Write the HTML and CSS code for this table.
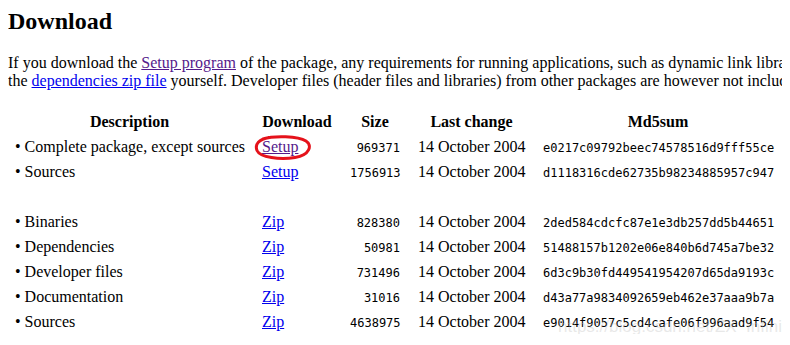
FILE: index.html
```html
<!DOCTYPE html>
<html>
<head>
<meta charset="utf-8">
<title>Download</title>
<link rel="stylesheet" href="styles.css">
</head>
<body>
<h1 class="title">Download</h1>
<p class="intro">If you download the <a class="visited" href="#setup">Setup program</a> of the package, any requirements for running applications, such as dynamic link libraries (DLL's) from the dependencies as listed below under Requirements, are already included. If you download the package as Zip files, then you must download and install<br>the <a href="#deps">dependencies zip file</a> yourself. Developer files (header files and libraries) from other packages are however not included; so if you wish to develop your own applications, you must separately install the required packages.</p>
<table class="downloads">
  <colgroup>
    <col class="c-desc"><col class="c-dl"><col class="c-size"><col class="c-date"><col class="c-md5">
  </colgroup>
  <thead>
    <tr><th class="desc">Description</th><th>Download</th><th>Size</th><th>Last change</th><th>Md5sum</th></tr>
  </thead>
  <tbody>
    <tr><td class="desc">&bull; Complete package, except sources</td><td><span class="circled"><a class="visited" href="#s1">Setup</a><svg class="ring" width="62" height="28" viewBox="0 0 62 28"><path d="M9 4 C 20 0.5, 44 1, 52 6 C 58.5 10, 56 20, 41 22.5 C 26 25, 6 22.5, 3 15.5 C 0.5 9, 5 4.5, 15 2.5" fill="none" stroke="#e5121b" stroke-width="3" stroke-linecap="round"/></svg></span></td><td class="num"><code>969371</code></td><td class="date">14 October 2004</td><td><code>e0217c09792beec74578516d9fff55ce</code></td></tr>
    <tr><td class="desc">&bull; Sources</td><td><a href="#s2">Setup</a></td><td class="num"><code>1756913</code></td><td class="date">14 October 2004</td><td><code>d1118316cde62735b98234885957c947</code></td></tr>
    <tr><td class="desc">&nbsp;</td><td></td><td></td><td></td><td></td></tr>
    <tr><td class="desc">&bull; Binaries</td><td><a href="#z1">Zip</a></td><td class="num"><code>828380</code></td><td class="date">14 October 2004</td><td><code>2ded584cdcfc87e1e3db257dd5b44651</code></td></tr>
    <tr><td class="desc">&bull; Dependencies</td><td><a href="#z2">Zip</a></td><td class="num"><code>50981</code></td><td class="date">14 October 2004</td><td><code>51488157b1202e06e840b6d745a7be32</code></td></tr>
    <tr><td class="desc">&bull; Developer files</td><td><a href="#z3">Zip</a></td><td class="num"><code>731496</code></td><td class="date">14 October 2004</td><td><code>6d3c9b30fd449541954207d65da9193c</code></td></tr>
    <tr><td class="desc">&bull; Documentation</td><td><a href="#z4">Zip</a></td><td class="num"><code>31016</code></td><td class="date">14 October 2004</td><td><code>d43a77a9834092659eb462e37aaa9b7a</code></td></tr>
    <tr><td class="desc">&bull; Sources</td><td><a href="#z5">Zip</a></td><td class="num"><code>4638975</code></td><td class="date">14 October 2004</td><td><code>e9014f9057c5cd4cafe06f996aad9f54</code></td></tr>
  </tbody>
</table>
<div class="watermark">https://blog.csdn.net/ZX_Infinite</div>
</body>
</html>
```
FILE: styles.css
```css
html, body {
  overflow: hidden;
}
body {
  margin: 8px;
  font-family: "Liberation Serif", "Times New Roman", serif;
  font-size: 16px;
  color: #000;
  background: #fff;
  position: relative;
}
a {
  color: #0000ee;
  text-decoration: underline;
}
a.visited {
  color: #551a8b;
}
.title {
  margin: 0;
  font-size: 24px;
  font-weight: bold;
  line-height: normal;
}
.intro {
  margin: 19px 0 19px 0;
  line-height: 18px;
  white-space: nowrap;
}
.downloads {
  border-collapse: separate;
  border-spacing: 0;
  table-layout: fixed;
  width: 774px;
}
.c-desc { width: 245px; }
.c-dl { width: 88px; }
.c-size { width: 68px; }
.c-date { width: 125px; }
.c-md5 { width: 248px; }
.downloads th,
.downloads td {
  height: 25px;
  padding: 0 9px;
  line-height: 25px;
  white-space: nowrap;
  vertical-align: middle;
  text-align: left;
}
.downloads th {
  font-weight: bold;
  text-align: center;
}
.downloads th.desc,
.downloads td.desc {
  padding-left: 7px;
}
.downloads td.num {
  text-align: right;
}
code {
  font-family: "DejaVu Sans Mono", "Liberation Mono", monospace;
  font-size: 12px;
  line-height: 14px;
}
.circled {
  position: relative;
  display: inline-block;
}
.ring {
  position: absolute;
  left: -8px;
  top: 1px;
  pointer-events: none;
}
.watermark {
  position: absolute;
  left: 550px;
  top: 309px;
  font-family: "Liberation Sans", Arial, sans-serif;
  font-size: 17px;
  color: rgba(190, 190, 190, 0.35);
  white-space: nowrap;
}
```
